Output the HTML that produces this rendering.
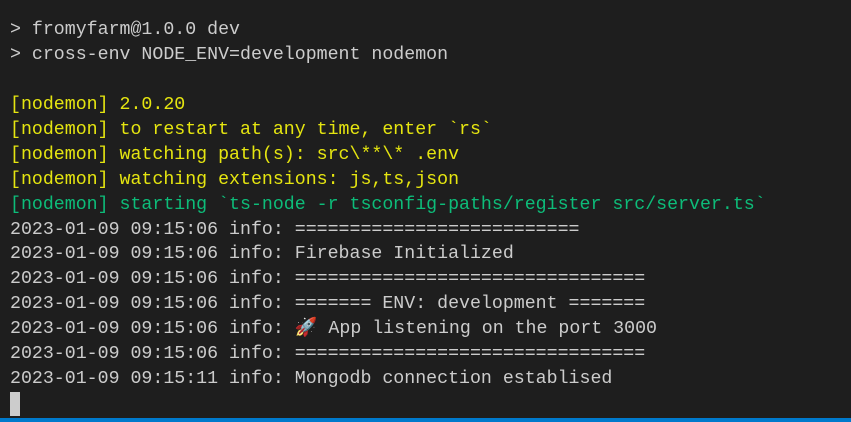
<!DOCTYPE html>
<html><head><meta charset="utf-8"><style>
html,body{margin:0;padding:0;background:#1e1e1e;width:851px;height:422px;overflow:hidden}
pre{margin:0;position:absolute;left:10px;top:18px;font-family:"Liberation Mono","DejaVu Sans Mono",monospace;font-size:18.26px;line-height:24.93px;color:#cccccc;white-space:pre}
.y{color:#e5e510}.g{color:#0dbc79}
.cur{display:inline-block;width:10px;height:24px;background:#cccccc;vertical-align:-6px}
.bar{position:absolute;left:0;bottom:0;width:851px;height:4px;background:#007acc}
</style></head><body>
<pre>&gt; fromyfarm@1.0.0 dev
&gt; cross-env NODE_ENV=development nodemon

<span class="y">[nodemon] 2.0.20</span>
<span class="y">[nodemon] to restart at any time, enter `rs`</span>
<span class="y">[nodemon] watching path(s): src\**\* .env</span>
<span class="y">[nodemon] watching extensions: js,ts,json</span>
<span class="g">[nodemon] starting `ts-node -r tsconfig-paths/register src/server.ts`</span>
2023-01-09 09:15:06 info: ==========================
2023-01-09 09:15:06 info: Firebase Initialized
2023-01-09 09:15:06 info: ================================
2023-01-09 09:15:06 info: ======= ENV: development =======
2023-01-09 09:15:06 info: 🚀 App listening on the port 3000
2023-01-09 09:15:06 info: ================================
2023-01-09 09:15:11 info: Mongodb connection establised
<span class="cur"></span></pre>
<div class="bar"></div>
</body></html>
